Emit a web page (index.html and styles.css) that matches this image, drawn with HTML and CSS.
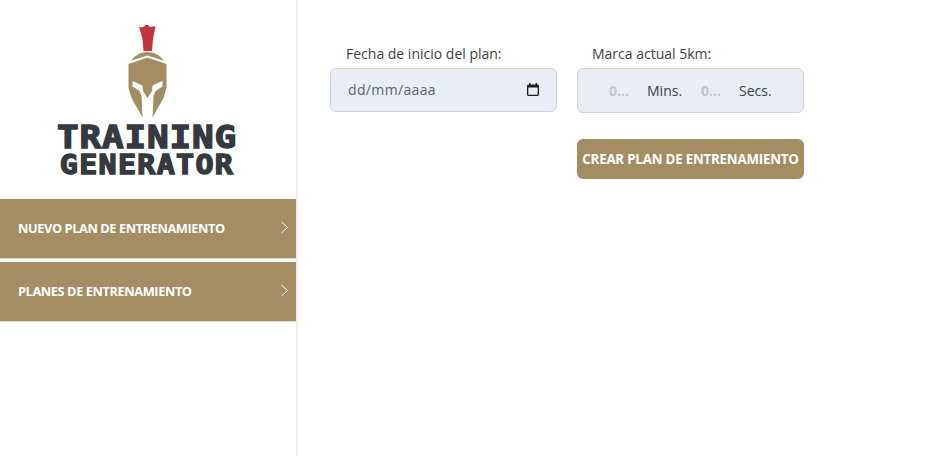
FILE: index.html
```html
<!DOCTYPE html>
<html lang="es">
<head>
<meta charset="utf-8">
<title>Training Generator</title>
<link rel="stylesheet" href="styles.css">
</head>
<body>
<div class="app">
  <aside class="sidebar">
    <div class="brand">
      <svg class="helmet" width="42" height="94" viewBox="0 0 42 94" aria-hidden="true">
        <path fill="#c1363b" d="M12 1.500 14.500 2.500 17 1.500 18.500 0 21 0 23 2 25.500 1.500 28.500 1.500 26 14 25 26 16.500 26 15.500 14Z"/>
        <path fill="#a58d63" d="M20.500 27C27 27 33 30 36.500 35.500L20.500 30.500 4.500 35.500C8 30 14 27 20.500 27Z"/>
        <path fill="#a58d63" d="M20.500 32.500 39.500 39V63L36.500 73 25.500 92.500H15.500L4.500 73 1.500 63V39Z"/>
        <path fill="#fff" d="M5.500 56 15.500 60.500 16 66 20.500 73 25 66 25.500 60.500 35.500 56 35.500 61.500 28.500 66 26.500 71 25.500 93H15.500L14.500 71 12.500 66 5.500 61.500Z"/>
      </svg>
      <div class="word word-top">TRAINING</div>
      <div class="word word-bottom">GENERATOR</div>
    </div>
    <nav class="menu">
      <a class="menu-item"><span>NUEVO PLAN DE ENTRENAMIENTO</span>
        <svg width="9" height="13" viewBox="0 0 9 13" aria-hidden="true"><path d="M1.500 1 7.500 6.500 1.500 12" fill="none" stroke="#fff" stroke-width="1"/></svg></a>
      <a class="menu-item"><span>PLANES DE ENTRENAMIENTO</span>
        <svg width="9" height="13" viewBox="0 0 9 13" aria-hidden="true"><path d="M1.500 1 7.500 6.500 1.500 12" fill="none" stroke="#fff" stroke-width="1"/></svg></a>
    </nav>
  </aside>
  <main class="content">
    <div class="field field-date">
      <label class="label">Fecha de inicio del plan:</label>
      <div class="box box-date">
        <input class="date-text" type="text" placeholder="dd/mm/aaaa">
        <svg class="cal" width="12" height="13" viewBox="0 0 12 13" aria-hidden="true"><path fill="#1d1d1d" fill-rule="evenodd" d="M2 0H3.500V1.500H8.500V0H10V1.500H10.500C11.300 1.500 12 2.200 12 3V11.500C12 12.300 11.300 13 10.500 13H1.500C.7 13 0 12.300 0 11.500V3C0 2.200 .7 1.500 1.500 1.500H2ZM1.300 4.500V11.700H10.700V4.500Z"/></svg>
      </div>
    </div>
    <div class="field field-time">
      <label class="label label-time">Marca actual 5km:</label>
      <div class="box box-time">
        <input class="num" type="text" placeholder="0...">
        <span class="unit unit-min">Mins.</span>
        <input class="num" type="text" placeholder="0...">
        <span class="unit unit-sec">Secs.</span>
      </div>
      <button class="submit" type="button">CREAR PLAN DE ENTRENAMIENTO</button>
    </div>
  </main>
</div>
</body>
</html>
```
FILE: styles.css
```css
* { box-sizing: border-box; }
html, body { margin: 0; height: 100%; background: #fff; }
body { font-family: "Open Sans", "Noto Sans", sans-serif; color: #3d4146; overflow: hidden; }
.app { display: flex; height: 456px; }

.sidebar { width: 298px; flex: none; border-right: 2px solid #eeeeee; }
.brand { height: 199px; padding-top: 25px; display: flex; flex-direction: column; align-items: center; }
.helmet { display: block; margin-left: -1px; flex: none; }
.word { font-family: "DejaVu Sans Mono", monospace; font-weight: 700; color: #343a40; white-space: nowrap; margin-left: -2px; -webkit-text-stroke: 1.6px #343a40; }
.word-top { font-size: 36px; line-height: 30px; letter-spacing: .8px; margin-top: 4px; height: 29px; transform: scaleY(.88); }
.word-bottom { font-size: 30px; line-height: 26px; letter-spacing: 1.3px; height: 26px; transform: scaleY(.86); }

.menu { display: flex; flex-direction: column; gap: 3px; }
.menu-item { height: 60px; background: #a58d63; border-bottom: 1px solid #dcdcdc; color: #fff; display: flex; align-items: center; justify-content: space-between; padding: 0 7px 2px 18px; font-size: 12.8px; font-weight: 700; letter-spacing: -.42px; }

.content { flex: 1; display: flex; gap: 20px; padding: 44px 0 0 32px; align-items: flex-start; }
.field { width: 227px; }
.label { display: block; font-size: 14px; line-height: 19px; margin-bottom: 5px; padding-left: 16px; }
.label-time { padding-left: 15px; }
.box { height: 44px; border: 1px solid #ced4da; border-radius: 6px; background: #e9eef5; display: flex; align-items: center; }
.box-date { padding: 0 18px 2px 17px; justify-content: space-between; }
.date-text { width: 120px; border: 0; background: none; padding: 0; font: 14px "Open Sans", sans-serif; letter-spacing: .35px; outline: 0; }
.date-text::placeholder { color: #5f646a; opacity: 1; }
.cal { margin-right: -1px; }
.box-time { height: 45px; padding-left: 31px; padding-bottom: 1px; }
.num { width: 22px; border: 0; background: none; padding: 0; font: 700 14px "Open Sans", sans-serif; outline: 0; }
.num::placeholder { color: #c3c5c8; opacity: 1; }
.unit { font-size: 14px; color: #3d4146; }
.unit-min { margin-left: 16px; width: 54px; }
.unit-sec { margin-left: 16px; }
.submit { display: block; width: 227px; height: 40px; margin-top: 26px; border: 0; border-radius: 6px; background: #a58d63; color: #fff; font: 700 13.3px "Open Sans", sans-serif; padding: 0; letter-spacing: -.2px; white-space: nowrap; }
```
